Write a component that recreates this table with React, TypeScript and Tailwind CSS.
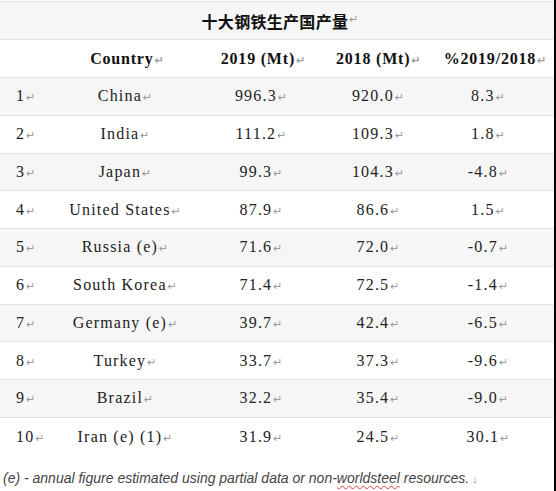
import React from "react";

const rows: [string, string, string, string, string][] = [
  ["1", "China", "996.3", "920.0", "8.3"],
  ["2", "India", "111.2", "109.3", "1.8"],
  ["3", "Japan", "99.3", "104.3", "-4.8"],
  ["4", "United States", "87.9", "86.6", "1.5"],
  ["5", "Russia (e)", "71.6", "72.0", "-0.7"],
  ["6", "South Korea", "71.4", "72.5", "-1.4"],
  ["7", "Germany (e)", "39.7", "42.4", "-6.5"],
  ["8", "Turkey", "33.7", "37.3", "-9.6"],
  ["9", "Brazil", "32.2", "35.4", "-9.0"],
  ["10", "Iran (e) (1)", "31.9", "24.5", "30.1"],
];

const Mark = () => (
  <span
    className="text-[11px] text-[#9a9a9a] ml-[1px] tracking-normal"
    style={{ fontFamily: '"DejaVu Sans", sans-serif' }}
  >
    ↵
  </span>
);

const serif = { fontFamily: '"Liberation Serif", "Noto Sans CJK SC", serif' };

export default function App() {
  return (
    <div className="w-[556px] h-[491px] bg-white flex overflow-hidden">
      <div className="w-[554px] flex flex-col pt-[1px]">
        <div className="border-t border-[#e3e3e3]">
          <div className="h-[38px] bg-[#f6f6f6] border-b border-[#e3e3e3] flex items-center justify-center pl-[6px]">
            <span
              className="text-[16px] font-bold text-[#111] tracking-[0.3px]"
              style={{ fontFamily: '"Noto Sans CJK SC", sans-serif' }}
            >
              十大钢铁生产国产量
            </span>
            <Mark />
          </div>
          <div
            className="h-[38px] bg-white border-b border-[#e3e3e3] grid grid-cols-[64px_122px_150px_84px_134px] items-center text-[16px] font-bold text-[#111] tracking-[0.8px] whitespace-nowrap"
            style={serif}
          >
            <div />
            <div className="text-center pl-[4px]">Country<Mark /></div>
            <div className="text-center pl-[4px]">2019 (Mt)<Mark /></div>
            <div className="text-center">2018 (Mt)<Mark /></div>
            <div className="text-center pl-[16px]">%2019/2018<Mark /></div>
          </div>
          {rows.map((r, i) => (
            <div
              key={r[0]}
              className={`h-[37.75px] grid grid-cols-[64px_122px_150px_84px_134px] items-center text-[16px] text-[#222] tracking-[1.2px] whitespace-pre ${
                i % 2 === 0 ? "bg-[#f6f6f6]" : "bg-white"
              } ${i === rows.length - 1 ? "" : "border-b border-[#e3e3e3]"}`}
              style={serif}
            >
              <div className="pl-[16px]">{r[0]}<Mark /></div>
              <div className="text-center">{r[1]}<Mark /></div>
              <div className="text-center">{r[2]}<Mark /></div>
              <div className="text-center">{r[3]}<Mark /></div>
              <div className="text-center pl-[2px]">{r[4]}<Mark /></div>
            </div>
          ))}
        </div>
        <div
          className="pt-[12px] pl-[3px] text-[14px] leading-[20px] italic text-[#444] whitespace-nowrap"
          style={{ fontFamily: '"Liberation Sans", Arial, sans-serif' }}
        >
          (e) - annual figure estimated using partial data or non-
          <span className="underline decoration-wavy decoration-[#e04040] decoration-1 underline-offset-2">worldsteel</span>{" "}
          resources.
          <span className="not-italic text-[11px] text-[#888] ml-[3px]">↓</span>
        </div>
      </div>
      <div className="w-[2px] bg-black" />
    </div>
  );
}
